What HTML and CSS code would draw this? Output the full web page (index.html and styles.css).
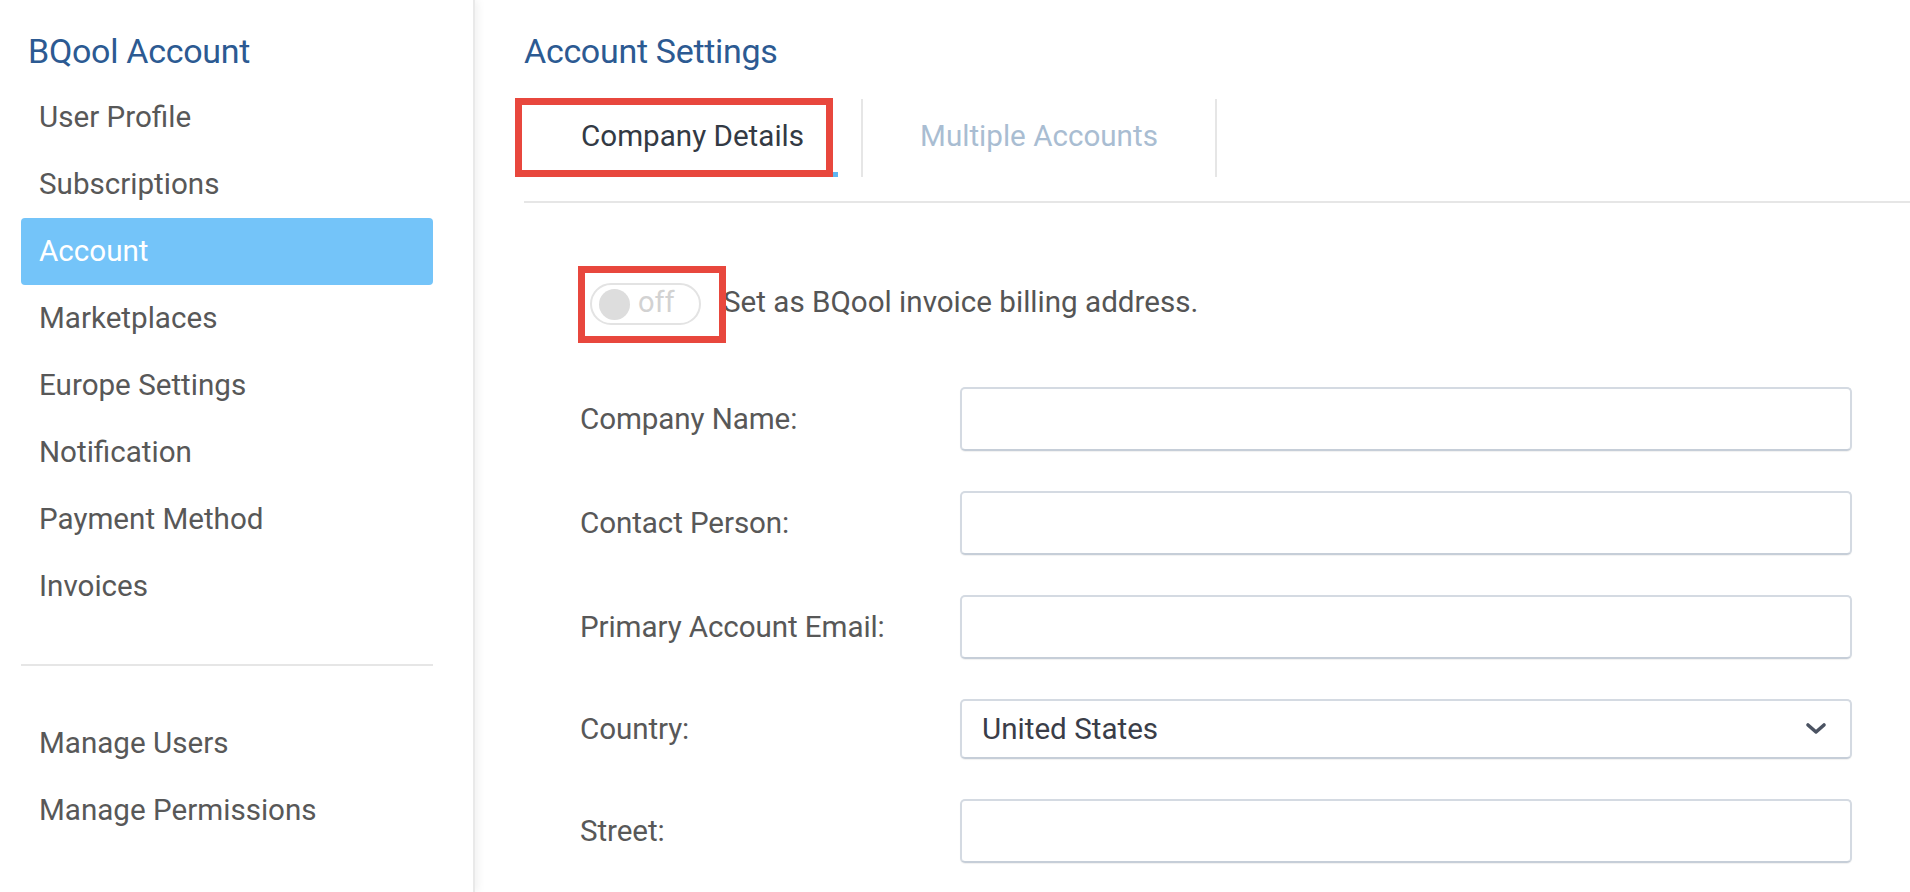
FILE: index.html
```html
<!DOCTYPE html>
<html lang="en">
<head>
<meta charset="utf-8">
<title>Account Settings</title>
<link rel="stylesheet" href="styles.css">
</head>
<body>
<div class="page">
  <aside class="sidebar">
    <div class="side-title">BQool Account</div>
    <ul class="menu">
      <li class="menu-item">User Profile</li>
      <li class="menu-item">Subscriptions</li>
      <li class="menu-item active">Account</li>
      <li class="menu-item">Marketplaces</li>
      <li class="menu-item">Europe Settings</li>
      <li class="menu-item">Notification</li>
      <li class="menu-item">Payment Method</li>
      <li class="menu-item">Invoices</li>
    </ul>
    <div class="divider"></div>
    <ul class="menu">
      <li class="menu-item">Manage Users</li>
      <li class="menu-item">Manage Permissions</li>
    </ul>
  </aside>
  <main class="main">
    <h1 class="page-title">Account Settings</h1>
    <div class="tabs">
      <div class="tab active">
        <div class="tab-inner">Company Details</div>
        <div class="highlight highlight-tab"></div>
      </div>
      <div class="tab">
        <div class="tab-inner">Multiple Accounts</div>
      </div>
    </div>
    <div class="content">
      <div class="toggle-row">
        <div class="toggle-wrap">
          <div class="toggle">
            <span class="knob"></span>
            <span class="toggle-text">off</span>
          </div>
          <div class="highlight highlight-toggle"></div>
        </div>
        <span class="toggle-label">Set as BQool invoice billing address.</span>
      </div>
      <div class="form">
        <label class="label">Company Name:</label>
        <div class="input"></div>
        <label class="label">Contact Person:</label>
        <div class="input"></div>
        <label class="label">Primary Account Email:</label>
        <div class="input"></div>
        <label class="label">Country:</label>
        <div class="input select">
          <span class="select-value">United States</span>
          <svg class="chevron" width="22" height="14" viewBox="0 0 22 14"><path d="M3 3 L11 10 L19 3" fill="none" stroke="#4b5362" stroke-width="3.6" stroke-linecap="round" stroke-linejoin="round"/></svg>
        </div>
        <label class="label">Street:</label>
        <div class="input"></div>
      </div>
    </div>
  </main>
</div>
</body>
</html>
```

FILE: styles.css
```css
* { box-sizing: border-box; }
html, body { margin: 0; padding: 0; }
body {
  font-family: Roboto, "Noto Sans", "Liberation Sans", sans-serif;
  background: #ffffff;
  color: #575757;
  width: 1910px;
  height: 892px;
  overflow: hidden;
}
.page {
  display: flex;
  height: 892px;
}
.sidebar {
  width: 475px;
  flex: none;
  padding: 31px 40px 0 21px;
  border-right: 2px solid #e9e9e9;
  background: #ffffff;
  position: relative;
  z-index: 1;
  box-shadow: 3px 0 8px rgba(0, 0, 0, 0.06);
}
.side-title {
  font-size: 34px;
  line-height: 40px;
  color: #2c5a92;
  padding-left: 7px;
  letter-spacing: -0.3px;
}
.menu {
  list-style: none;
  margin: 13px 0 0;
  padding: 0;
}
.menu-item {
  height: 67px;
  line-height: 67px;
  padding-left: 18px;
  font-size: 29.6px;
  color: #585858;
  border-radius: 4px;
}
.menu-item.active {
  background: #74c4f9;
  color: #ffffff;
}
.divider {
  height: 2px;
  background: #e6e6e6;
  margin: 44px 0 44px;
}
.divider + .menu { margin-top: 0; }
.main {
  flex: 1;
  padding-left: 49px;
  background: #ffffff;
}
.page-title {
  margin: 31px 0 0;
  font-size: 34px;
  line-height: 40px;
  font-weight: 400;
  color: #2c5a92;
  letter-spacing: -0.3px;
}
.tabs {
  display: flex;
  margin-top: 28px;
  padding-bottom: 24px;
  border-bottom: 2px solid #e6e6e6;
}
.tab {
  position: relative;
  padding: 0 23px;
  border-right: 2px solid #e6e6e6;
  height: 78px;
}
.tab-inner {
  height: 78px;
  padding: 0 34px;
  display: flex;
  align-items: center;
  font-size: 29.6px;
  color: #a9bdd2;
  border-bottom: 5px solid transparent;
}
.tab.active .tab-inner {
  color: #333a44;
  border-bottom-color: #5eb6f2;
}
.highlight {
  position: absolute;
  border: 7px solid #e8473d;
  pointer-events: none;
}
.highlight-tab {
  left: -9px;
  top: -1px;
  width: 318px;
  height: 79px;
}
.content {
  padding-left: 56px;
  padding-right: 58px;
}
.toggle-row {
  display: flex;
  align-items: center;
  margin-top: 80px;
  height: 42px;
}
.toggle-wrap {
  position: relative;
  margin-left: 10px;
}
.toggle {
  width: 111px;
  height: 42px;
  border: 2px solid #e3e3e3;
  border-radius: 21px;
  display: flex;
  align-items: center;
  padding-left: 7px;
  gap: 8px;
}
.knob {
  width: 31px;
  height: 31px;
  border-radius: 50%;
  background: #dddddd;
  flex: none;
}
.toggle-text {
  font-size: 29px;
  color: #d2d2d2;
  line-height: 1;
  margin-top: -3px;
}
.highlight-toggle {
  left: -12px;
  top: -17px;
  width: 148px;
  height: 77px;
}
.toggle-label {
  margin-left: 22px;
  font-size: 29.6px;
  color: #555555;
  margin-top: -4px;
}
.form {
  display: grid;
  grid-template-columns: 380px 1fr;
  row-gap: 40px;
  align-items: center;
  margin-top: 62px;
}
.label {
  font-size: 29.6px;
  color: #585858;
  letter-spacing: -0.1px;
}
.input {
  height: 64px;
  border: 2px solid #d4dae2;
  border-bottom-color: #c6ced8;
  border-radius: 5px;
  background: #ffffff;
  box-shadow: 0 1px 1px rgba(0, 0, 0, 0.06);
}
.select {
  height: 60px;
  display: flex;
  align-items: center;
  justify-content: space-between;
  padding: 0 23px 0 20px;
}
.select-value {
  font-size: 29.6px;
  color: #3a3d48;
}
.chevron { display: block; }
```
